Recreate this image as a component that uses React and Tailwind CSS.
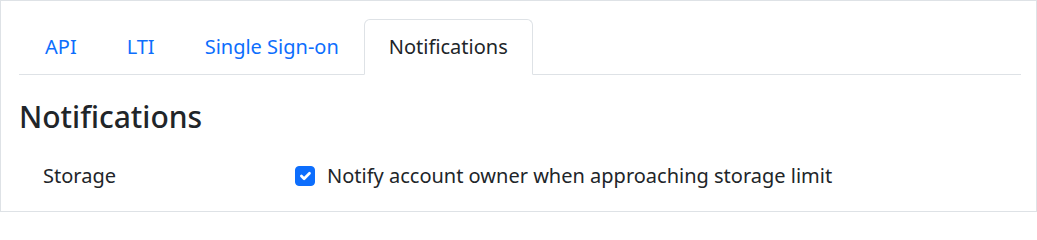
import React, { useState } from 'react';

const tabs = ['API', 'LTI', 'Single Sign-on', 'Notifications'];

function App() {
  const [active, setActive] = useState('Notifications');
  const [notify, setNotify] = useState(true);

  return (
    <div className="h-[212px] border border-[#dee2e6] pl-[18px] pr-[15px] pt-[18px] text-[#212529] bg-white" style={{ fontFamily: '"Noto Sans", sans-serif' }}>
      {/* tabs */}
      <ul className="flex border-b border-[#dee2e6] pl-px">
        {tabs.map((tab) => (
          <li key={tab} className="-mb-px">
            <button
              type="button"
              onClick={() => setActive(tab)}
              className={
                active === tab
                  ? 'block px-6 py-[12px] text-[20px] leading-[30px] border border-[#dee2e6] border-b-white rounded-t-md bg-white text-[#212529]'
                  : 'block px-6 py-[12px] text-[20px] leading-[30px] border border-transparent text-[#0d6efd]'
              }
            >
              {tab}
            </button>
          </li>
        ))}
      </ul>

      <h2 className="mt-[24px] text-[30px] leading-[36px] font-medium">Notifications</h2>

      <div className="flex items-center mt-[26px]">
        <div className="w-[276px] pl-6 text-[20px] leading-[30px]">Storage</div>
        <label className="flex items-center gap-3 text-[20px] leading-[30px] cursor-pointer">
          <input
            type="checkbox"
            checked={notify}
            onChange={(e) => setNotify(e.target.checked)}
            className="sr-only"
          />
          <span
            className={
              notify
                ? 'flex w-5 h-5 items-center justify-center rounded-[4px] bg-[#0d6efd] border border-[#0d6efd]'
                : 'flex w-5 h-5 items-center justify-center rounded-[4px] bg-white border border-[#adb5bd]'
            }
          >
            {notify && (
              <svg viewBox="0 0 20 20" className="w-5 h-5" fill="none">
                <path d="M6 10l3 3l6-6" stroke="#fff" strokeWidth="3" strokeLinecap="round" strokeLinejoin="round" />
              </svg>
            )}
          </span>
          Notify account owner when approaching storage limit
        </label>
      </div>
    </div>
  );
}

export default App;
